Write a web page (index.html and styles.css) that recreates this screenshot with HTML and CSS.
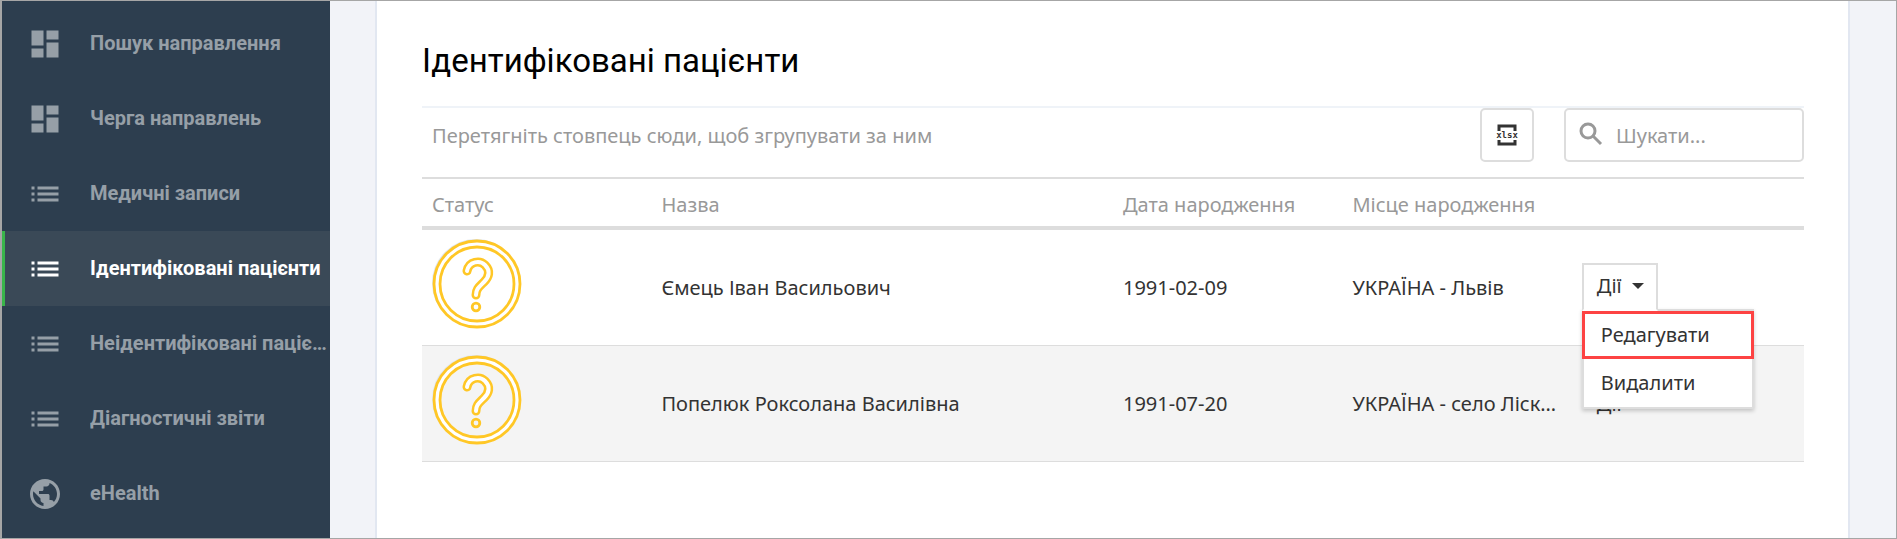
FILE: index.html
```
<!DOCTYPE html>
<html lang="uk">
<head>
    <meta charset="UTF-8">
    <meta name="viewport" content="width=device-width, initial-scale=1.0">
    <title>Ідентифіковані пацієнти</title>
    <link rel="stylesheet" href="styles.css">
</head>
<body>
    <svg class="sprite" aria-hidden="true">
        <symbol id="dashboard" viewBox="0 0 24 24"><path d="M3 13h8V3H3v10zm0 8h8v-6H3v6zm10 0h8V11h-8v10zm0-18v6h8V3h-8z"/></symbol>
        <symbol id="list" viewBox="0 0 24 24"><path d="M3 13h2v-2H3v2zm0 4h2v-2H3v2zm0-8h2V7H3v2zm4 4h14v-2H7v2zm0 4h14v-2H7v2zM7 7v2h14V7H7z"/></symbol>
        <symbol id="globe" viewBox="0 0 24 24"><path d="M12 2C6.48 2 2 6.48 2 12s4.480 10 10 10 10-4.480 10-10S17.520 2 12 2zm-1 17.930c-3.950-.49-7-3.850-7-7.930 0-.62.080-1.210.210-1.790L9 15v1c0 1.100.9 2 2 2v1.930zm6.900-2.540c-.26-.81-1-1.390-1.900-1.390h-1v-3c0-.55-.45-1-1-1H8v-2h2c.55 0 1-.45 1-1V7h2c1.100 0 2-.9 2-2v-.41c2.930 1.190 5 4.060 5 7.410 0 2.080-.8 3.970-2.100 5.390z"/></symbol>
        <symbol id="unknown" viewBox="0 0 90 90">
            <g fill="none">
                <circle cx="44" cy="44" r="42" stroke="#dfe6f0" stroke-width="4"/>
                <circle cx="45" cy="45" r="40" stroke="#fff" stroke-width="6"/>
                <g stroke="#ffc726" stroke-width="2.800">
                    <circle cx="45" cy="45" r="43"/>
                    <circle cx="45" cy="45" r="37"/>
                    <circle cx="44" cy="68" r="3.800"/>
                </g>
                <path d="M35 32C37 22 48 21 53 26C59 32 57 38 52 43C47 48 44 50 44 56" stroke="#ffc726" stroke-width="9" stroke-linecap="round"/>
                <path d="M35 32C37 22 48 21 53 26C59 32 57 38 52 43C47 48 44 50 44 56" stroke="#fff" stroke-width="4" stroke-linecap="round"/>
            </g>
        </symbol>
    </svg>

    <nav class="sidebar">
        <a class="nav-item" href="#"><svg class="nav-icon"><use href="#dashboard"/></svg><span class="nav-text">Пошук направлення</span></a>
        <a class="nav-item" href="#"><svg class="nav-icon"><use href="#dashboard"/></svg><span class="nav-text">Черга направлень</span></a>
        <a class="nav-item" href="#"><svg class="nav-icon"><use href="#list"/></svg><span class="nav-text">Медичні записи</span></a>
        <a class="nav-item active" href="#"><svg class="nav-icon"><use href="#list"/></svg><span class="nav-text">Ідентифіковані пацієнти</span></a>
        <a class="nav-item" href="#"><svg class="nav-icon"><use href="#list"/></svg><span class="nav-text">Неідентифіковані пацієнти</span></a>
        <a class="nav-item" href="#"><svg class="nav-icon"><use href="#list"/></svg><span class="nav-text">Діагностичні звіти</span></a>
        <a class="nav-item" href="#"><svg class="nav-icon"><use href="#globe"/></svg><span class="nav-text">eHealth</span></a>
    </nav>

    <main class="content">
        <section class="card">
            <h1>Ідентифіковані пацієнти</h1>
            <div class="toolbar">
                <span class="group-hint">Перетягніть стовпець сюди, щоб згрупувати за ним</span>
                <button class="export" type="button" aria-label="xlsx">
                    <svg width="24" height="24" viewBox="0 0 24 24">
                        <path d="M4 8V3h16v5M4 17v4h16v-4" fill="none" stroke="#333" stroke-width="3"/>
                        <text x="12" y="15" text-anchor="middle">xlsx</text>
                    </svg>
                </button>
                <label class="search">
                    <svg class="search-icon" viewBox="0 0 24 24"><circle cx="9" cy="8" r="7"/><path d="M14 13l8 8"/></svg>
                    <input type="text" placeholder="Шукати..." aria-label="Шукати">
                </label>
            </div>
            <table class="grid">
                <colgroup>
                    <col class="col">
                    <col class="col-wide">
                    <col class="col">
                    <col class="col">
                    <col>
                </colgroup>
                <thead>
                    <tr>
                        <th>Статус</th>
                        <th>Назва</th>
                        <th>Дата народження</th>
                        <th>Місце народження</th>
                        <th></th>
                    </tr>
                </thead>
                <tbody>
                    <tr>
                        <td class="status"><svg class="status-icon"><use href="#unknown"/></svg></td>
                        <td>Ємець Іван Васильович</td>
                        <td>1991-02-09</td>
                        <td>УКРАЇНА - Львів</td>
                        <td class="actions">
                            <div class="dropdown open">
                                <button class="toggle" type="button">Дії <span class="caret"></span></button>
                                <div class="menu">
                                    <button class="menu-item marked" type="button">Редагувати</button>
                                    <button class="menu-item" type="button">Видалити</button>
                                </div>
                            </div>
                        </td>
                    </tr>
                    <tr>
                        <td class="status"><svg class="status-icon"><use href="#unknown"/></svg></td>
                        <td>Попелюк Роксолана Василівна</td>
                        <td>1991-07-20</td>
                        <td>УКРАЇНА - село Лісківці</td>
                        <td class="actions">
                            <div class="dropdown">
                                <button class="toggle" type="button">Дії <span class="caret"></span></button>
                            </div>
                        </td>
                    </tr>
                </tbody>
            </table>
        </section>
    </main>
</body>
</html>
```

FILE: styles.css
```
* {
    box-sizing: border-box;
}

body {
    margin: 0;
    min-height: 100vh;
    display: flex;
    border: 1px solid #a6a6a6;
    border-left-width: 2px;
    background-color: #f2f3f8;
    color: #333;
    font-family: "Noto Sans", sans-serif;
    font-size: 20px;
}

button, input {
    font: inherit;
    color: inherit;
}

.sprite {
    display: none;
}

/* sidebar */
.sidebar {
    flex: 0 0 328px;
    min-width: 0;
    padding-top: 5px;
    background-color: #2d3e4f;
}

.nav-item {
    display: flex;
    align-items: center;
    gap: 27px;
    height: 75px;
    padding: 0 1px 0 22px;
    border-left: 3px solid transparent;
    color: #969fa7;
    font-family: Roboto, sans-serif;
    font-weight: bold;
    text-decoration: none;
}

.nav-item.active {
    background-color: #3a4957;
    border-left-color: #39b54a;
    color: #fff;
}

.nav-icon {
    flex: none;
    width: 36px;
    height: 36px;
    fill: currentColor;
}

.nav-text {
    padding-bottom: 2px;
    overflow: hidden;
    text-overflow: ellipsis;
    white-space: nowrap;
}

/* content */
.content {
    flex: 1;
    min-width: 0;
    display: flex;
    padding: 0 46px 0 45px;
}

.card {
    flex: 1;
    min-width: 0;
    padding: 39px 44px 0 45px;
    background-color: #fff;
    border: solid #e2e7f1;
    border-width: 0 2px;
}

h1 {
    margin: 0;
    padding-bottom: 24px;
    border-bottom: 2px solid #eff3f8;
    color: #000;
    font-family: Roboto, sans-serif;
    font-size: 33px;
    font-weight: normal;
    line-height: 42px;
}

.toolbar {
    display: flex;
    gap: 30px;
    padding-bottom: 15px;
}

.group-hint {
    flex: 1;
    padding: 2px 0 0 10px;
    color: #999;
    line-height: 52px;
}

.export {
    display: flex;
    align-items: center;
    justify-content: center;
    width: 54px;
    height: 54px;
    padding: 0;
    background-color: #fff;
    border: 2px solid #ddd;
    border-radius: 5px;
}

.export text {
    fill: #333;
    font-family: "DejaVu Sans Mono", monospace;
    font-size: 9px;
    font-weight: bold;
}

.search {
    display: flex;
    align-items: center;
    gap: 13px;
    width: 240px;
    height: 54px;
    padding: 0 13px;
    border: 2px solid #ddd;
    border-radius: 5px;
}

.search-icon {
    flex: none;
    width: 24px;
    height: 24px;
    fill: none;
    stroke: #999;
    stroke-width: 3;
    overflow: visible;
}

.search input {
    width: 100%;
    min-width: 0;
    padding: 0;
    border: none;
    outline: none;
    background: none;
}

.search input::placeholder {
    color: #999;
}

/* table */
.grid {
    width: 100%;
    table-layout: fixed;
    border-spacing: 0;
    border-top: 2px solid #ddd;
}

.col {
    width: 16.6%;
}

.col-wide {
    width: 33.4%;
}

.grid th {
    height: 51px;
    padding: 4px 10px 0;
    border-bottom: 4px solid #ddd;
    color: #999;
    font-weight: normal;
    text-align: left;
}

.grid td {
    height: 116px;
    padding: 0 14px 0 10px;
    border-bottom: 1px solid #ddd;
    overflow: hidden;
    text-overflow: ellipsis;
    white-space: nowrap;
}

.grid tbody tr:nth-child(even) {
    background-color: #f4f4f4;
}

.grid .status {
    padding-top: 9px;
    vertical-align: top;
}

.status-icon {
    display: block;
    width: 90px;
    height: 90px;
}

.grid .actions {
    padding-bottom: 2px;
    overflow: visible;
}

.dropdown {
    position: relative;
    width: 76px;
}

.toggle {
    display: flex;
    align-items: center;
    gap: 10px;
    width: 76px;
    height: 48px;
    padding: 2px 13px 0;
    background: none;
    border: 2px solid transparent;
}

.caret {
    border: 6px solid transparent;
    border-top-color: #333;
    border-bottom: none;
}

.open .toggle {
    position: relative;
    z-index: 2;
    padding: 0 13px 2px;
    background-color: #fff;
    border-color: #ddd #ddd #fff;
}

.menu {
    position: absolute;
    top: 46px;
    left: 0;
    z-index: 1;
    width: 172px;
    background-color: #fff;
    border: 2px solid #ddd;
    box-shadow: 0 2px 4px rgba(0, 0, 0, 0.2);
}

.menu-item {
    display: block;
    width: 100%;
    height: 48px;
    padding: 0 17px;
    background: none;
    border: none;
    text-align: left;
}

.menu-item.marked {
    width: 172px;
    margin: 0 -2px;
    padding: 0 16px;
    border: 3px solid #fd4343;
}
```
